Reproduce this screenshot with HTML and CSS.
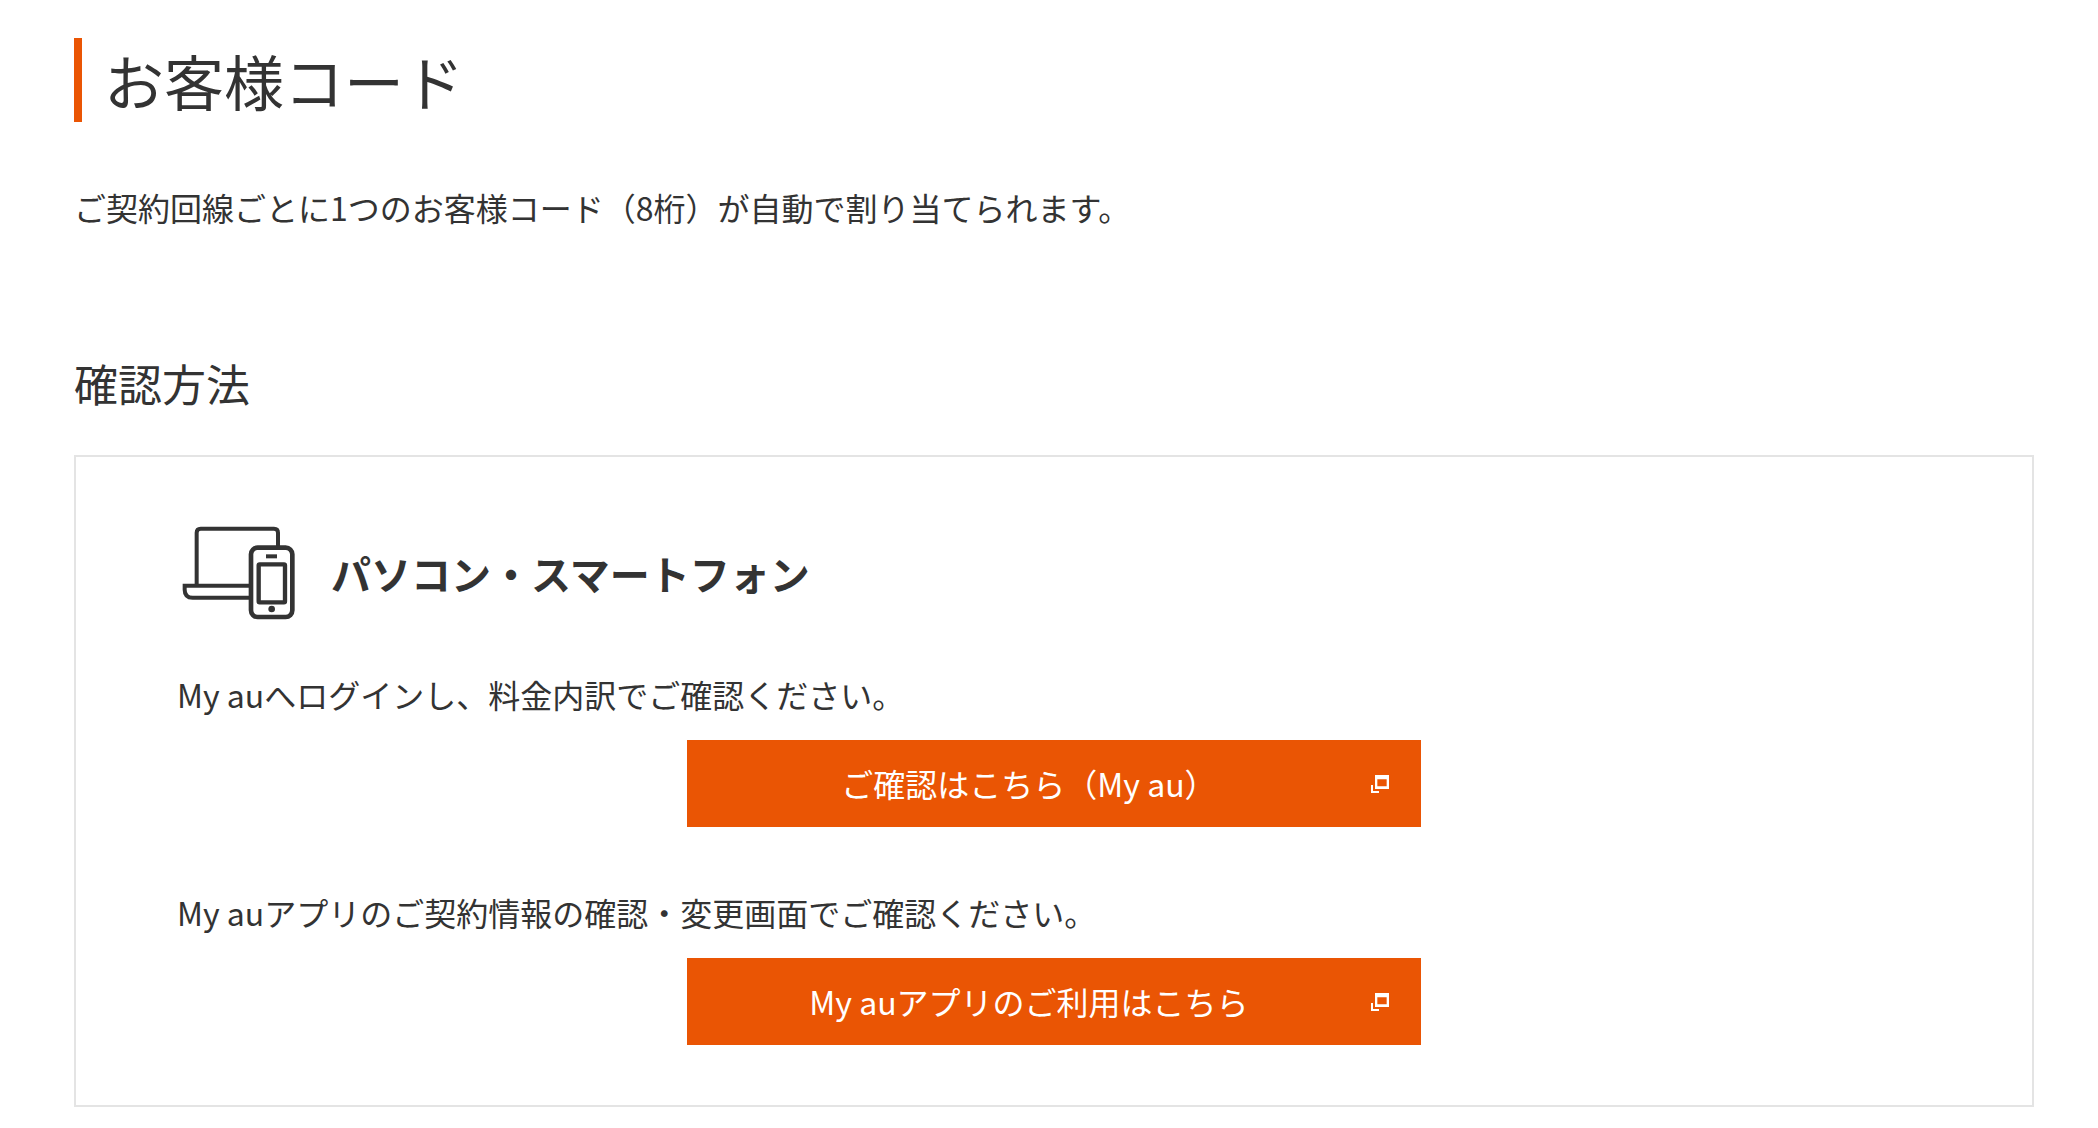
FILE: index.html
```
<!DOCTYPE html>
<html lang="ja">
<head>
  <meta charset="UTF-8">
  <meta name="viewport" content="width=device-width, initial-scale=1.0">
  <title>お客様コード</title>
  <link rel="stylesheet" href="styles.css">
</head>
<body>
  <main class="content">
    <h1 class="page-title">お客様コード</h1>
    <p class="lead">ご契約回線ごとに1つのお客様コード（8桁）が自動で割り当てられます。</p>

    <h2 class="section-title">確認方法</h2>
    <section class="box">
      <div class="box-head">
        <svg class="device-icon" viewBox="51 51 372 336" fill="none" stroke="#333" stroke-width="12" aria-hidden="true">
          <path d="M110 256V98q0-12 12-12h220q12 0 12 12v44"/>
          <path d="M270 257H74v12q0 24 24 24h172"/>
          <rect x="273" y="143" width="124" height="208" rx="20" stroke-width="14"/>
          <rect x="296" y="193" width="79" height="114" rx="3" stroke-width="13"/>
          <path d="M318 169h33"/>
          <circle cx="335" cy="327" r="10" fill="#333" stroke="none"/>
        </svg>
        <h3 class="box-title">パソコン・スマートフォン</h3>
      </div>

      <p class="box-text">My auへログインし、料金内訳でご確認ください。</p>
      <a class="button" href="#">
        ご確認はこちら（My au）
        <svg class="blank-icon" viewBox="0 0 54 54" fill="#fff" aria-hidden="true">
          <path fill-rule="evenodd" d="M12 0h42v42H12zM19 13v21h28V13z"/>
          <path d="M0 30h6v18h18v6H0z"/>
        </svg>
      </a>

      <p class="box-text">My auアプリのご契約情報の確認・変更画面でご確認ください。</p>
      <a class="button" href="#">
        My auアプリのご利用はこちら
        <svg class="blank-icon" viewBox="0 0 54 54" fill="#fff" aria-hidden="true">
          <path fill-rule="evenodd" d="M12 0h42v42H12zM19 13v21h28V13z"/>
          <path d="M0 30h6v18h18v6H0z"/>
        </svg>
      </a>
    </section>
  </main>
</body>
</html>
```
FILE: styles.css
```
:root {
  --main-color: #ea5504;
  --text-color: #333;
  --border-color: #e4e4e4;
}

* {
  box-sizing: border-box;
}

body {
  margin: 0;
  font-family: "Noto Sans CJK JP", sans-serif;
  font-size: 32px;
  line-height: 48px;
  color: var(--text-color);
  background-color: #fff;
}

h1,
h2,
h3,
p {
  margin: 0;
}

.content {
  padding: 38px 64px 20px 74px;
}

.page-title {
  padding-left: 22px;
  border-left: 8px solid var(--main-color);
  font-size: 60px;
  font-weight: 400;
  line-height: 84px;
}

.lead {
  margin-top: 61px;
}

.section-title {
  margin: 121px 0 41px;
  font-size: 44px;
  font-weight: 400;
  line-height: 62px;
}

.box {
  padding: 60px 101px;
  border: 2px solid var(--border-color);
}

.box-head {
  display: flex;
  align-items: center;
  gap: 30px;
  margin-bottom: 41px;
}

.device-icon {
  flex: none;
  width: 124px;
  height: 112px;
}

.box-title {
  font-size: 40px;
  font-weight: 700;
  line-height: 60px;
}

.button {
  position: relative;
  display: block;
  max-width: 734px;
  margin: 22px auto 0;
  padding: 19px 74px 20px 24px;
  color: #fff;
  background-color: var(--main-color);
  text-align: center;
  text-decoration: none;
}

.button + .box-text {
  margin-top: 61px;
}

.blank-icon {
  position: absolute;
  top: 35px;
  right: 32px;
  width: 18px;
  height: 18px;
}
```
